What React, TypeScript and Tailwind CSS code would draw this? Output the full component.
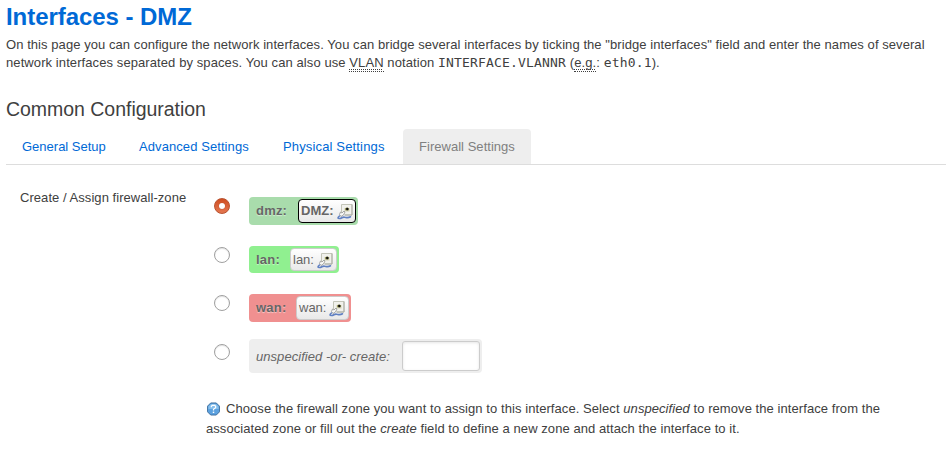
import React from "react";

function NetIcon() {
  return (
    <svg width="16" height="16" viewBox="0 0 16 16" className="mt-0.5 shrink-0">
      <path d="M4.500 8V.5h10.500v10.500H8" fill="#f1f1ec" stroke="#c3c5b8" />
      <path d="M15 .5v10.500H7.500" fill="none" stroke="#aaaca4" />
      <path d="M7.500 4h5v3.500h-5z" fill="#d2d2b8" />
      <ellipse cx="10" cy="5" rx="2" ry="1.500" fill="#8f8d4a" />
      <circle cx="10.300" cy="5" r="1.200" fill="#101010" />
      <path d="M2.500 10.500L3.500 8l1.500 1L7 7l1 1-1.500 3-2.500 1.500z" fill="#f8f8f6" stroke="#8f918e" strokeWidth="0.8" />
      <path d="M2.500 12Q-.5 14.500 2.500 14.500C5 14.500 5 12.800 7.500 13.200S11 14.200 13.500 12.800" fill="none" stroke="#6080c2" strokeWidth="1.600" strokeLinecap="round" />
    </svg>
  );
}

function HelpIcon() {
  return (
    <svg width="13" height="14" viewBox="0 0 14 14" className="ml-px shrink-0">
      <path d="M4 .5h6L13.500 4v6L10 13.500H4L.5 10V4z" fill="#5ba1df" stroke="#3c6c9c" />
      <path d="M4.400 1.500h5.200l2.900 2.900v2.600h-11V4.400z" fill="#86bfec" />
      <path d="M4.700 5V4l1-1h2.600l1 1v1.500L7 7.300v1.300" fill="none" stroke="#fff" strokeWidth="1.300" />
      <path d="M6.200 9.800h1.600v1.500H6.200z" fill="#fff" />
    </svg>
  );
}

function Radio({ checked = false }: { checked?: boolean }) {
  return checked ? (
    <span className="flex h-4 w-4 items-center justify-center rounded-full border border-[#b95230] bg-linear-to-b from-[#cf4d20] to-[#e47750]">
      <span className="h-1.5 w-1.5 rounded-full bg-white shadow-[0_0_1px_#9c3b1d]" />
    </span>
  ) : (
    <span className="h-4 w-4 rounded-full border border-[#a0a0a0] bg-white shadow-[inset_0_1px_1px_#e3e3e3]" />
  );
}

function Abbr({ children }: { children: React.ReactNode }) {
  return (
    <abbr className="border-b border-dotted border-[#404040] pb-px underline decoration-dotted decoration-1 underline-offset-2 [text-decoration-skip-ink:none]">
      {children}
    </abbr>
  );
}

function Var({ children }: { children: React.ReactNode }) {
  return (
    <var className="font-['DejaVu_Sans_Mono',monospace] text-[13px] leading-none tracking-[0.174px] not-italic">
      {children}
    </var>
  );
}

interface ZoneProps {
  name: string;
  label: string;
  row: string;
  badge: string;
  network: string;
  active?: boolean;
}

function Zone({ name, label, row, badge, network, active }: ZoneProps) {
  return (
    <div className={`flex items-start ${row}`}>
      <Radio checked={active} />
      <div className={`ml-[19px] flex items-center justify-between rounded pl-[7px] text-[#666] ${badge}`}>
        <b className="tracking-[0.2px] [text-shadow:0_1px_1px_#ffffff80]">{name}</b>
        <span className={`flex items-center justify-between rounded bg-linear-to-b from-white to-[#e9e9e9] ${network}`}>
          <span>{label}</span>
          <NetIcon />
        </span>
      </div>
    </div>
  );
}

export default function App() {
  return (
    <main className="h-[450px] w-[952px] overflow-hidden bg-white pl-1.5 font-['Liberation_Sans',Arial,sans-serif] text-[13px] leading-[18px] text-[#404040]">
      <h1 className="h-9 text-2xl leading-[34px] font-bold tracking-[-0.06px] text-[#0069d6]">Interfaces - DMZ</h1>
      <p className="h-[54px] tracking-[0.065px] whitespace-nowrap">
        On this page you can configure the network interfaces. You can bridge several interfaces by ticking the "bridge interfaces" field and enter the names of several
        <br />
        <span className="tracking-[0.09px]">
          network interfaces separated by spaces. You can also use <Abbr>VLAN</Abbr> notation{" "}
          <Var>INTERFACE.VLANNR</Var> (<Abbr>e.g.</Abbr>: <Var>eth0.1</Var>).
        </span>
      </p>
      <h2 className="h-[39px] text-[19.5px] leading-[38px] tracking-[-0.03px]">Common Configuration</h2>
      <nav className="flex h-9 w-[940px] border-b border-[#ddd] leading-9 whitespace-nowrap text-[#0069d6]">
        <a className="w-[117px] pl-4">General Setup</a>
        <a className="w-36 pl-4 tracking-[0.08px]">Advanced Settings</a>
        <a className="w-[136px] pl-4 tracking-[0.15px]">Physical Settings</a>
        <a className="w-32 rounded-t bg-[#eee] pl-4 tracking-[0.03px] text-[#808080]">Firewall Settings</a>
      </nav>
      <section className="flex">
        <div className="w-[200px] pt-6 pl-3.5 tracking-[0.05px]">Create / Assign firewall-zone</div>
        <div>
          <div className="pt-8 pl-2">
            <Zone name="dmz:" label="DMZ:" active row="h-[49px] [&>span]:mt-[1px]" badge="h-7 w-[109px] pr-0.5 bg-[#a9dcac]" network="h-6 w-[58px] border border-black px-0.5 font-bold" />
            <Zone name="lan:" label="lan:" row="h-12 [&>span]:mt-[1px]" badge="h-[27px] w-[90px] pr-0.5 bg-[#90f090]" network="h-[23px] w-[47px] border border-[#ccc] pl-0.5 pr-[3px]" />
            <Zone name="wan:" label="wan:" row="h-[45px] [&>span]:mt-[1px]" badge="h-7 w-[102px] pr-0.5 bg-[#f09090]" network="h-6 w-[53px] border border-[#ccc] pl-0.5 pr-[3px]" />
            <div className="flex items-start">
              <span className="flex pt-[5px]"><Radio /></span>
              <div className="ml-[19px] flex h-[34px] w-[233px] items-center justify-between rounded bg-[#eee] pr-0.5 pl-[7px] text-[#666]">
                <em className="pt-0.5 tracking-[0.05px]">unspecified -or- create:</em>
                <input aria-label="New zone name" className="h-[30px] w-[78px] rounded-[3px] border border-[#ccc] bg-white px-1 shadow-[inset_0_1px_3px_#0000001a] outline-none" />
              </div>
            </div>
          </div>
          <div className="mt-[26px] leading-5 tracking-[0.07px] whitespace-nowrap">
            <div className="flex items-center gap-1.5">
              <HelpIcon />
              <span>Choose the firewall zone you want to assign to this interface. Select <em>unspecified</em> to remove the interface from the</span>
            </div>
            <div>associated zone or fill out the <em>create</em> field to define a new zone and attach the interface to it.</div>
          </div>
        </div>
      </section>
    </main>
  );
}
